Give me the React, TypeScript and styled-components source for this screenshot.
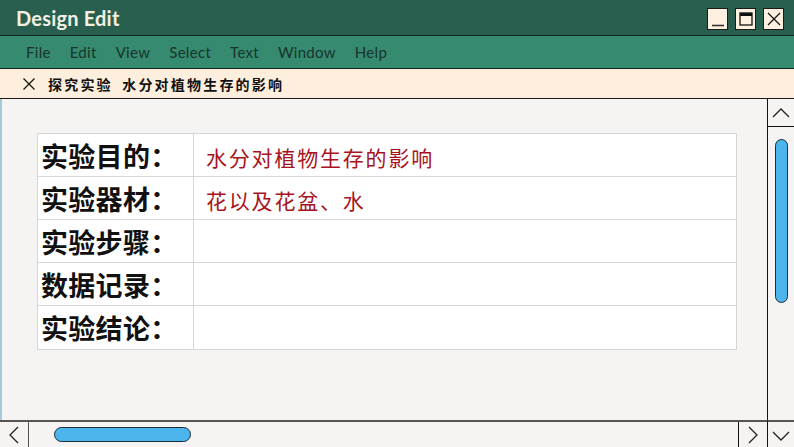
import React from "react";
import styled, { createGlobalStyle } from "styled-components";

const Global = createGlobalStyle`
  html, body { margin: 0; padding: 0; width: 794px; height: 447px; overflow: hidden; background: #f5f4f2; }
  #root { width: 794px; height: 447px; }
`;

const Window = styled.div`
  width: 794px;
  height: 447px;
  display: flex;
  flex-direction: column;
  background: #f5f4f2;
  font-family: Lato, "Noto Sans", sans-serif;
`;

const TitleBar = styled.div`
  height: 35px;
  flex: none;
  background: #285f4f;
  border-bottom: 1px solid #10241d;
  display: flex;
  align-items: center;
  justify-content: space-between;
  padding: 0 10px 0 16px;
`;

const Title = styled.div`
  color: #f3efe2;
  font-family: Lato, sans-serif;
  font-weight: 700;
  font-size: 20px;
  letter-spacing: 0.2px;
  margin-top: 1px;
`;

const Controls = styled.div`
  display: flex;
  gap: 7px;
  margin-top: 2px;
`;

const CtrlButton = styled.div`
  width: 19px;
  height: 20px;
  background: #fdf0e0;
  border: 1.5px solid #1a1a1a;
  display: flex;
  align-items: center;
  justify-content: center;
`;

const MenuBar = styled.div`
  height: 32px;
  flex: none;
  background: #368a6f;
  border-bottom: 1px solid #10241d;
  display: flex;
  align-items: center;
  padding-left: 26px;
  gap: 19px;
`;

const MenuItem = styled.span`
  color: #17352c;
  font-size: 15px;
  font-family: Lato, sans-serif;
  letter-spacing: 0.3px;
`;

const TabBar = styled.div`
  height: 29px;
  flex: none;
  background: #fdeedd;
  border-bottom: 1px solid #1a1a1a;
  display: flex;
  align-items: center;
  padding-left: 22px;
  gap: 12px;
`;

const TabText = styled.span`
  font-family: "Noto Sans CJK SC", sans-serif;
  font-size: 14px;
  letter-spacing: 2.2px;
  word-spacing: 4px;
  color: #111;
  font-weight: 700;
`;

const Body = styled.div`
  flex: 1;
  min-height: 0;
  display: grid;
  grid-template-columns: 1fr 27px;
  grid-template-rows: 1fr 27px;
`;

const Content = styled.div`
  border-left: 2px solid #a4cbdc;
  padding: 34px 0 0 35px;
  background: #f5f4f2;
  overflow: hidden;
`;

const Table = styled.div`
  width: 698px;
  background: #fff;
  border: 1px solid #d6d6d6;
  display: grid;
  grid-template-columns: 156px 1fr;
  grid-auto-rows: 43px;
`;

const LabelCell = styled.div<{ last?: boolean }>`
  border-right: 1px solid #d6d6d6;
  border-bottom: ${(p) => (p.last ? "none" : "1px solid #d6d6d6")};
  display: flex;
  align-items: center;
  padding-left: 3px;
  font-family: "Noto Sans CJK SC", sans-serif;
  font-weight: 700;
  font-size: 27px;
  color: #111;
  letter-spacing: 0.3px;
`;

const ValueCell = styled.div<{ last?: boolean }>`
  border-bottom: ${(p) => (p.last ? "none" : "1px solid #d6d6d6")};
  display: flex;
  align-items: center;
  padding-left: 12px;
  padding-top: 4px;
  font-family: "Noto Sans CJK SC", sans-serif;
  font-weight: 400;
  font-size: 21px;
  color: #a8121c;
  letter-spacing: 1.8px;
`;

const VScroll = styled.div`
  border-left: 1.5px solid #111;
  display: flex;
  flex-direction: column;
`;

const ArrowCell = styled.div<{ top?: boolean }>`
  height: 27px;
  flex: none;
  display: flex;
  align-items: center;
  justify-content: center;
  border-bottom: ${(p) => (p.top ? "1.5px solid #111" : "none")};
`;

const VTrack = styled.div`
  flex: 1;
  padding: 12px 0 0 7px;
`;

const VThumb = styled.div`
  width: 11px;
  height: 162px;
  background: #4cb5ee;
  border: 1.5px solid #1c2d3a;
  border-radius: 8px;
`;

const HScroll = styled.div`
  border-top: 2px solid #555;
  display: flex;
  align-items: stretch;
`;

const HArrow = styled.div<{ side: "left" | "right" }>`
  width: 28px;
  flex: none;
  display: flex;
  align-items: center;
  justify-content: center;
  border-left: ${(p) => (p.side === "right" ? "1.5px solid #111" : "none")};
  border-right: ${(p) => (p.side === "left" ? "1.5px solid #555" : "none")};
`;

const HTrack = styled.div`
  flex: 1;
  display: flex;
  align-items: center;
  padding-left: 25px;
`;

const HThumb = styled.div`
  width: 135px;
  height: 13px;
  background: #4cb5ee;
  border: 1.5px solid #1c2d3a;
  border-radius: 8px;
`;

const Corner = styled.div`
  border-left: 1.5px solid #111;
  border-top: 2px solid #555;
  display: flex;
  align-items: center;
  justify-content: center;
`;

const Chevron = ({ dir }: { dir: "up" | "down" | "left" | "right" }) => {
  const paths: Record<string, string> = {
    up: "M2 12 L10 4 L18 12",
    down: "M2 5 L10 13 L18 5",
    left: "M12 2 L4 10 L12 18",
    right: "M4 2 L12 10 L4 18",
  };
  const w = dir === "up" || dir === "down" ? 20 : 16;
  const h = dir === "up" || dir === "down" ? 16 : 20;
  return (
    <svg width={w} height={h} viewBox={`0 0 ${w} ${h}`}>
      <path d={paths[dir]} fill="none" stroke="#222" strokeWidth="1.3" />
    </svg>
  );
};

const rows: { label: string; value?: string }[] = [
  { label: "实验目的：", value: "水分对植物生存的影响" },
  { label: "实验器材：", value: "花以及花盆、水" },
  { label: "实验步骤：" },
  { label: "数据记录：" },
  { label: "实验结论：" },
];

const menus = ["File", "Edit", "View", "Select", "Text", "Window", "Help"];

export default function App() {
  return (
    <>
      <Global />
      <Window>
        <TitleBar>
          <Title>Design Edit</Title>
          <Controls>
            <CtrlButton>
              <svg width="16" height="16" viewBox="0 0 16 16">
                <path d="M2 14.5 H14" stroke="#333" strokeWidth="1.6" />
              </svg>
            </CtrlButton>
            <CtrlButton>
              <svg width="16" height="16" viewBox="0 0 16 16">
                <rect x="2" y="2" width="12" height="12" fill="none" stroke="#111" strokeWidth="1.3" />
                <rect x="2" y="2" width="12" height="3" fill="#111" />
              </svg>
            </CtrlButton>
            <CtrlButton>
              <svg width="16" height="16" viewBox="0 0 16 16">
                <path d="M2 2 L14 14 M14 2 L2 14" stroke="#111" strokeWidth="1.2" />
              </svg>
            </CtrlButton>
          </Controls>
        </TitleBar>
        <MenuBar>
          {menus.map((m) => (
            <MenuItem key={m}>{m}</MenuItem>
          ))}
        </MenuBar>
        <TabBar>
          <svg width="14" height="14" viewBox="0 0 14 14">
            <path d="M1.5 1.5 L12.5 12.5 M12.5 1.5 L1.5 12.5" stroke="#111" strokeWidth="1.2" />
          </svg>
          <TabText>探究实验 水分对植物生存的影响</TabText>
        </TabBar>
        <Body>
          <Content>
            <Table>
              {rows.map((r, i) => (
                <React.Fragment key={r.label}>
                  <LabelCell last={i === rows.length - 1}>{r.label}</LabelCell>
                  <ValueCell last={i === rows.length - 1}>{r.value ?? ""}</ValueCell>
                </React.Fragment>
              ))}
            </Table>
          </Content>
          <VScroll>
            <ArrowCell top>
              <Chevron dir="up" />
            </ArrowCell>
            <VTrack>
              <VThumb />
            </VTrack>
          </VScroll>
          <HScroll>
            <HArrow side="left">
              <Chevron dir="left" />
            </HArrow>
            <HTrack>
              <HThumb />
            </HTrack>
            <HArrow side="right">
              <Chevron dir="right" />
            </HArrow>
          </HScroll>
          <Corner>
            <Chevron dir="down" />
          </Corner>
        </Body>
      </Window>
    </>
  );
}
